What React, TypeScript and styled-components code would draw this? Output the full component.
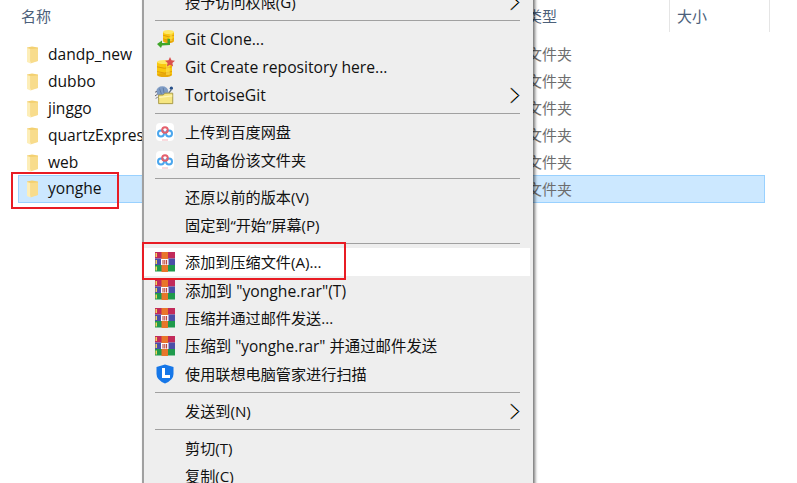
import React from 'react'
import styled, { createGlobalStyle } from 'styled-components'

const GlobalStyle = createGlobalStyle`
  html, body {
    margin: 0;
    padding: 0;
    background: #fff;
  }
  body {
    font-family: 'Open Sans', 'Noto Sans CJK SC', sans-serif;
  }
`

const FolderIcon = () => (
  <svg width="14" height="18" viewBox="0 0 14 18">
    <path d="M1 1.5 L6 0.5 L12 1.5 L12 15 L1 16 Z" fill="#f3d070" />
    <path d="M1 2 L4.5 3 L4.5 17.5 L1 16 Z" fill="#fdeeb8" />
    <path d="M4.5 3 L12 2.5 L12 15 L4.5 17.5 Z" fill="#f8dc8c" />
  </svg>
)

const Coins = ({ x, y, w, h }: { x: number; y: number; w: number; h: number }) => (
  <g transform={`translate(${x} ${y})`}>
    <rect x="0" y="2" width={w} height={h - 4} fill="#f9c80e" />
    <ellipse cx={w / 2} cy={h - 2} rx={w / 2} ry="2" fill="#e8a90a" />
    <ellipse cx={w / 2} cy="2" rx={w / 2} ry="2" fill="#ffe866" />
    <path
      d={`M0 ${h * 0.4} Q${w / 2} ${h * 0.4 + 3} ${w} ${h * 0.4} M0 ${h * 0.68} Q${w / 2} ${h * 0.68 + 3} ${w} ${h * 0.68}`}
      stroke="#e09a08"
      strokeWidth="1"
      fill="none"
    />
    <rect x={w * 0.6} y="3" width={w * 0.25} height={h - 5} fill="#ffe35a" opacity="0.55" />
  </g>
)

const GitCloneIcon = () => (
  <svg width="20" height="20" viewBox="0 0 20 20">
    <Coins x={8} y={1} w={11} h={13} />
    <path d="M12.5 9.5 L12.5 14 L7 14 L7 11.5 L2 15 L6 19 L7 16.5 L15 16 L15 10 Z" fill="#3fa62a" />
  </svg>
)

const GitCreateIcon = () => (
  <svg width="20" height="20" viewBox="0 0 20 20">
    <Coins x={2} y={3} w={15} h={17} />
    <path d="M15 0 L16.5 3.3 L20 3.7 L17.4 6.1 L18.1 9.6 L15 7.8 L11.9 9.6 L12.6 6.1 L10 3.7 L13.5 3.3 Z" fill="#d9504e" />
  </svg>
)

const TortoiseIcon = () => (
  <svg width="22" height="20" viewBox="0 0 22 20">
    <ellipse cx="8" cy="6" rx="6.5" ry="5.5" fill="#7f9cc4" />
    <path d="M5 3 L7 9 M9 2 L10 8" stroke="#5e7aa3" strokeWidth="1" />
    <path d="M2 6 L0 7 M3 9 L0 11 M3 12 L1 14" stroke="#556" strokeWidth="1" />
    <circle cx="18" cy="2.5" r="1.8" fill="#27508a" />
    <path d="M15 8 L18 4" stroke="#5a6b80" strokeWidth="1.4" />
    <path d="M4 10 L9 10 L11 8 L19.5 8 L19.5 19.5 L4 19.5 Z" fill="#f6e681" stroke="#a39540" strokeWidth="1" />
    <path d="M4.5 12.5 L19 11" stroke="#fff6b8" strokeWidth="1.4" />
  </svg>
)

const BaiduIcon = () => (
  <svg width="20" height="20" viewBox="0 0 20 20">
    <rect x="1" y="1" width="18" height="18" rx="4" fill="#fff" />
    <circle cx="6" cy="11.5" r="3" fill="none" stroke="#4aa6ee" strokeWidth="2" />
    <circle cx="14" cy="11.5" r="3" fill="none" stroke="#4aa6ee" strokeWidth="2" />
    <circle cx="10" cy="8" r="2.8" fill="none" stroke="#e4606d" strokeWidth="2" />
    <path d="M7 18 L13 18" stroke="#f3b6bd" strokeWidth="1" />
  </svg>
)

const RarIcon = () => (
  <svg width="20" height="20" viewBox="0 0 20 20">
    <rect x="0" y="0" width="20" height="6.5" fill="#c22a5a" />
    <rect x="0" y="6.5" width="20" height="6.5" fill="#4b4fa8" />
    <rect x="0" y="13" width="20" height="6.5" fill="#1f9a4c" />
    <rect x="0.5" y="1" width="1.5" height="4" fill="#f3d25a" />
    <rect x="0.5" y="8" width="1.5" height="4" fill="#f3d25a" />
    <rect x="0.5" y="14.5" width="1.5" height="4" fill="#f3d25a" />
    <rect x="6.5" y="0" width="6.5" height="20" fill="#e8762a" />
    <rect x="6" y="7" width="7.5" height="6" fill="#fff" />
    <path d="M8 8 L8 12.5 M9.8 8 L9.8 12.5 M11.6 8 L11.6 12.5" stroke="#b7322a" strokeWidth="1" />
  </svg>
)

const ShieldIcon = () => (
  <svg width="20" height="20" viewBox="0 0 20 20">
    <path d="M10 0.5 L18.5 3 L18.5 10 Q18.5 16 10 19.5 Q1.5 16 1.5 10 L1.5 3 Z" fill="#1677e8" />
    <path d="M7 4 L10 4 L10 11 L15 11 L15 14 L7 14 Z" fill="#fff" />
  </svg>
)

// the reference chevron has subpixel fringes: orange on the left, blue on the right
const ChevronIcon = () => (
  <svg width="10" height="17" viewBox="0 0 11 17">
    <path d="M0 0.5 L8.5 8.5 L0 16.5" fill="none" stroke="#e8912a" strokeWidth="1" />
    <path d="M2 0.5 L10.5 8.5 L2 16.5" fill="none" stroke="#2a86e0" strokeWidth="1" />
    <path d="M1 0.5 L9.5 8.5 L1 16.5" fill="none" stroke="#0a0a0a" strokeWidth="1.1" />
  </svg>
)

const icons = {
  clone: <GitCloneIcon />,
  create: <GitCreateIcon />,
  tortoise: <TortoiseIcon />,
  baidu: <BaiduIcon />,
  rar: <RarIcon />,
  shield: <ShieldIcon />,
}

type IconName = keyof typeof icons

interface MenuEntry {
  label?: string
  icon?: IconName
  sub?: boolean
  active?: boolean
  latin?: boolean
  size?: number
  gap?: number
}

const entries: MenuEntry[] = [
  { label: '授予访问权限(G)', sub: true },
  { gap: 9 },
  { label: 'Git Clone...', icon: 'clone', latin: true },
  { label: 'Git Create repository here...', icon: 'create', latin: true },
  { label: 'TortoiseGit', icon: 'tortoise', sub: true, latin: true },
  { gap: 9 },
  { label: '上传到百度网盘', icon: 'baidu' },
  { label: '自动备份该文件夹', icon: 'baidu' },
  { gap: 9 },
  { label: '还原以前的版本(V)' },
  { label: '固定到“开始”屏幕(P)' },
  { gap: 9 },
  { label: '添加到压缩文件(A)...', icon: 'rar', active: true },
  { label: '添加到 "yonghe.rar"(T)', icon: 'rar', latin: true },
  { label: '压缩并通过邮件发送...', icon: 'rar' },
  { label: '压缩到 "yonghe.rar" 并通过邮件发送', icon: 'rar', size: 15.4 },
  { label: '使用联想电脑管家进行扫描', icon: 'shield' },
  { gap: 9 },
  { label: '发送到(N)', sub: true },
  { gap: 9 },
  { label: '剪切(T)' },
  { label: '复制(C)' },
]

const folders = ['dandp_new', 'dubbo', 'jinggo', 'quartzExpress', 'web', 'yonghe']

export default function App() {
  return (
    <Page>
      <GlobalStyle />
      <Header>
        <HeaderCell>名称</HeaderCell>
        <HeaderCell $divider>类型</HeaderCell>
        <SizeCell>大小</SizeCell>
      </Header>
      <FileList>
        {folders.map((name) => (
          <FileRow key={name} $selected={name === 'yonghe'}>
            <FolderIcon />
            <FileName>{name}</FileName>
            <FileType>文件夹</FileType>
          </FileRow>
        ))}
      </FileList>

      <Menu>
        {entries.map((entry, i) =>
          entry.label ? (
            <MenuRow key={i} $active={entry.active}>
              <IconSlot>{entry.icon && icons[entry.icon]}</IconSlot>
              <MenuLabel $latin={entry.latin} $size={entry.size}>
                {entry.label}
              </MenuLabel>
              {entry.sub && <ChevronIcon />}
            </MenuRow>
          ) : (
            <Separator key={i} $height={entry.gap || 9} />
          )
        )}
      </Menu>

      <FileMark />
      <MenuMark />
    </Page>
  )
}

const Page = styled.div`
  position: relative;
  width: 797px;
  height: 483px;
  overflow: hidden;
  background: #fff;
`

const Header = styled.div`
  display: grid;
  grid-template-columns: 506px 143px 100px;
  height: 33px;
  padding-left: 21px;
  color: #4c607a;
  font-size: 15px;
`

const HeaderCell = styled.div<{ $divider?: boolean }>`
  height: 32px;
  line-height: 33px;
  border-right: ${(p) => (p.$divider ? '1px solid #e5e5e5' : 'none')};
`

const SizeCell = styled(HeaderCell)`
  padding-left: 7px;
  border-right: 1px solid #e5e5e5;
`

const FileList = styled.div`
  display: flex;
  flex-direction: column;
  margin: 8px 0 0 18px;
  width: 747px;
`

const FileRow = styled.div<{ $selected?: boolean }>`
  display: grid;
  grid-template-columns: 22px 479px 1fr;
  align-items: center;
  box-sizing: border-box;
  height: ${(p) => (p.$selected ? '28px' : '27px')};
  margin-top: ${(p) => (p.$selected ? '-1px' : '0')};
  padding-left: ${(p) => (p.$selected ? '7px' : '8px')};
  background: ${(p) => (p.$selected ? '#cce8ff' : 'transparent')};
  border: ${(p) => (p.$selected ? '1px solid #99d1ff' : 'none')};
`

const FileName = styled.span`
  padding-bottom: 2px;
  color: #111;
  font-size: 15.6px;
  white-space: nowrap;
`

const FileType = styled.span`
  padding-bottom: 2px;
  color: #6d6d6d;
  font-size: 15px;
`

const Menu = styled.div`
  position: absolute;
  top: -12px;
  left: 142px;
  box-sizing: border-box;
  width: 391px;
  padding: 0 3px 0 0;
  background: #eeeeee;
  border-left: 2px solid #a0a0a0;
  box-shadow: 2px 0 3px rgba(0, 0, 0, 0.55);
`

const MenuRow = styled.div<{ $active?: boolean }>`
  display: flex;
  align-items: center;
  height: 28px;
  padding: 0 10px 0 11px;
  background: ${(p) => (p.$active ? '#ffffff' : 'transparent')};
  color: #111;
`

const IconSlot = styled.span`
  display: flex;
  align-items: center;
  justify-content: center;
  flex: none;
  width: 20px;
  height: 20px;
  margin-right: 10px;
`

const MenuLabel = styled.span<{ $latin?: boolean; $size?: number }>`
  flex: 1;
  padding-bottom: ${(p) => (p.$latin ? '0' : '2px')};
  font-size: ${(p) => p.$size || (p.$latin ? 15.7 : 15.15)}px;
  white-space: nowrap;
`

const Separator = styled.div<{ $height: number }>`
  display: flex;
  align-items: center;
  height: ${(p) => p.$height}px;
  padding: 0 10px 0 11px;

  &::after {
    content: '';
    flex: 1;
    height: 1px;
    background: #a0a0a0;
  }
`

const FileMark = styled.div`
  position: absolute;
  top: 172px;
  left: 11px;
  box-sizing: border-box;
  width: 108px;
  height: 37px;
  border: 2px solid #e81c24;
`

const MenuMark = styled.div`
  position: absolute;
  top: 242px;
  left: 142px;
  box-sizing: border-box;
  width: 204px;
  height: 38px;
  border: 2px solid #e81c24;
`
